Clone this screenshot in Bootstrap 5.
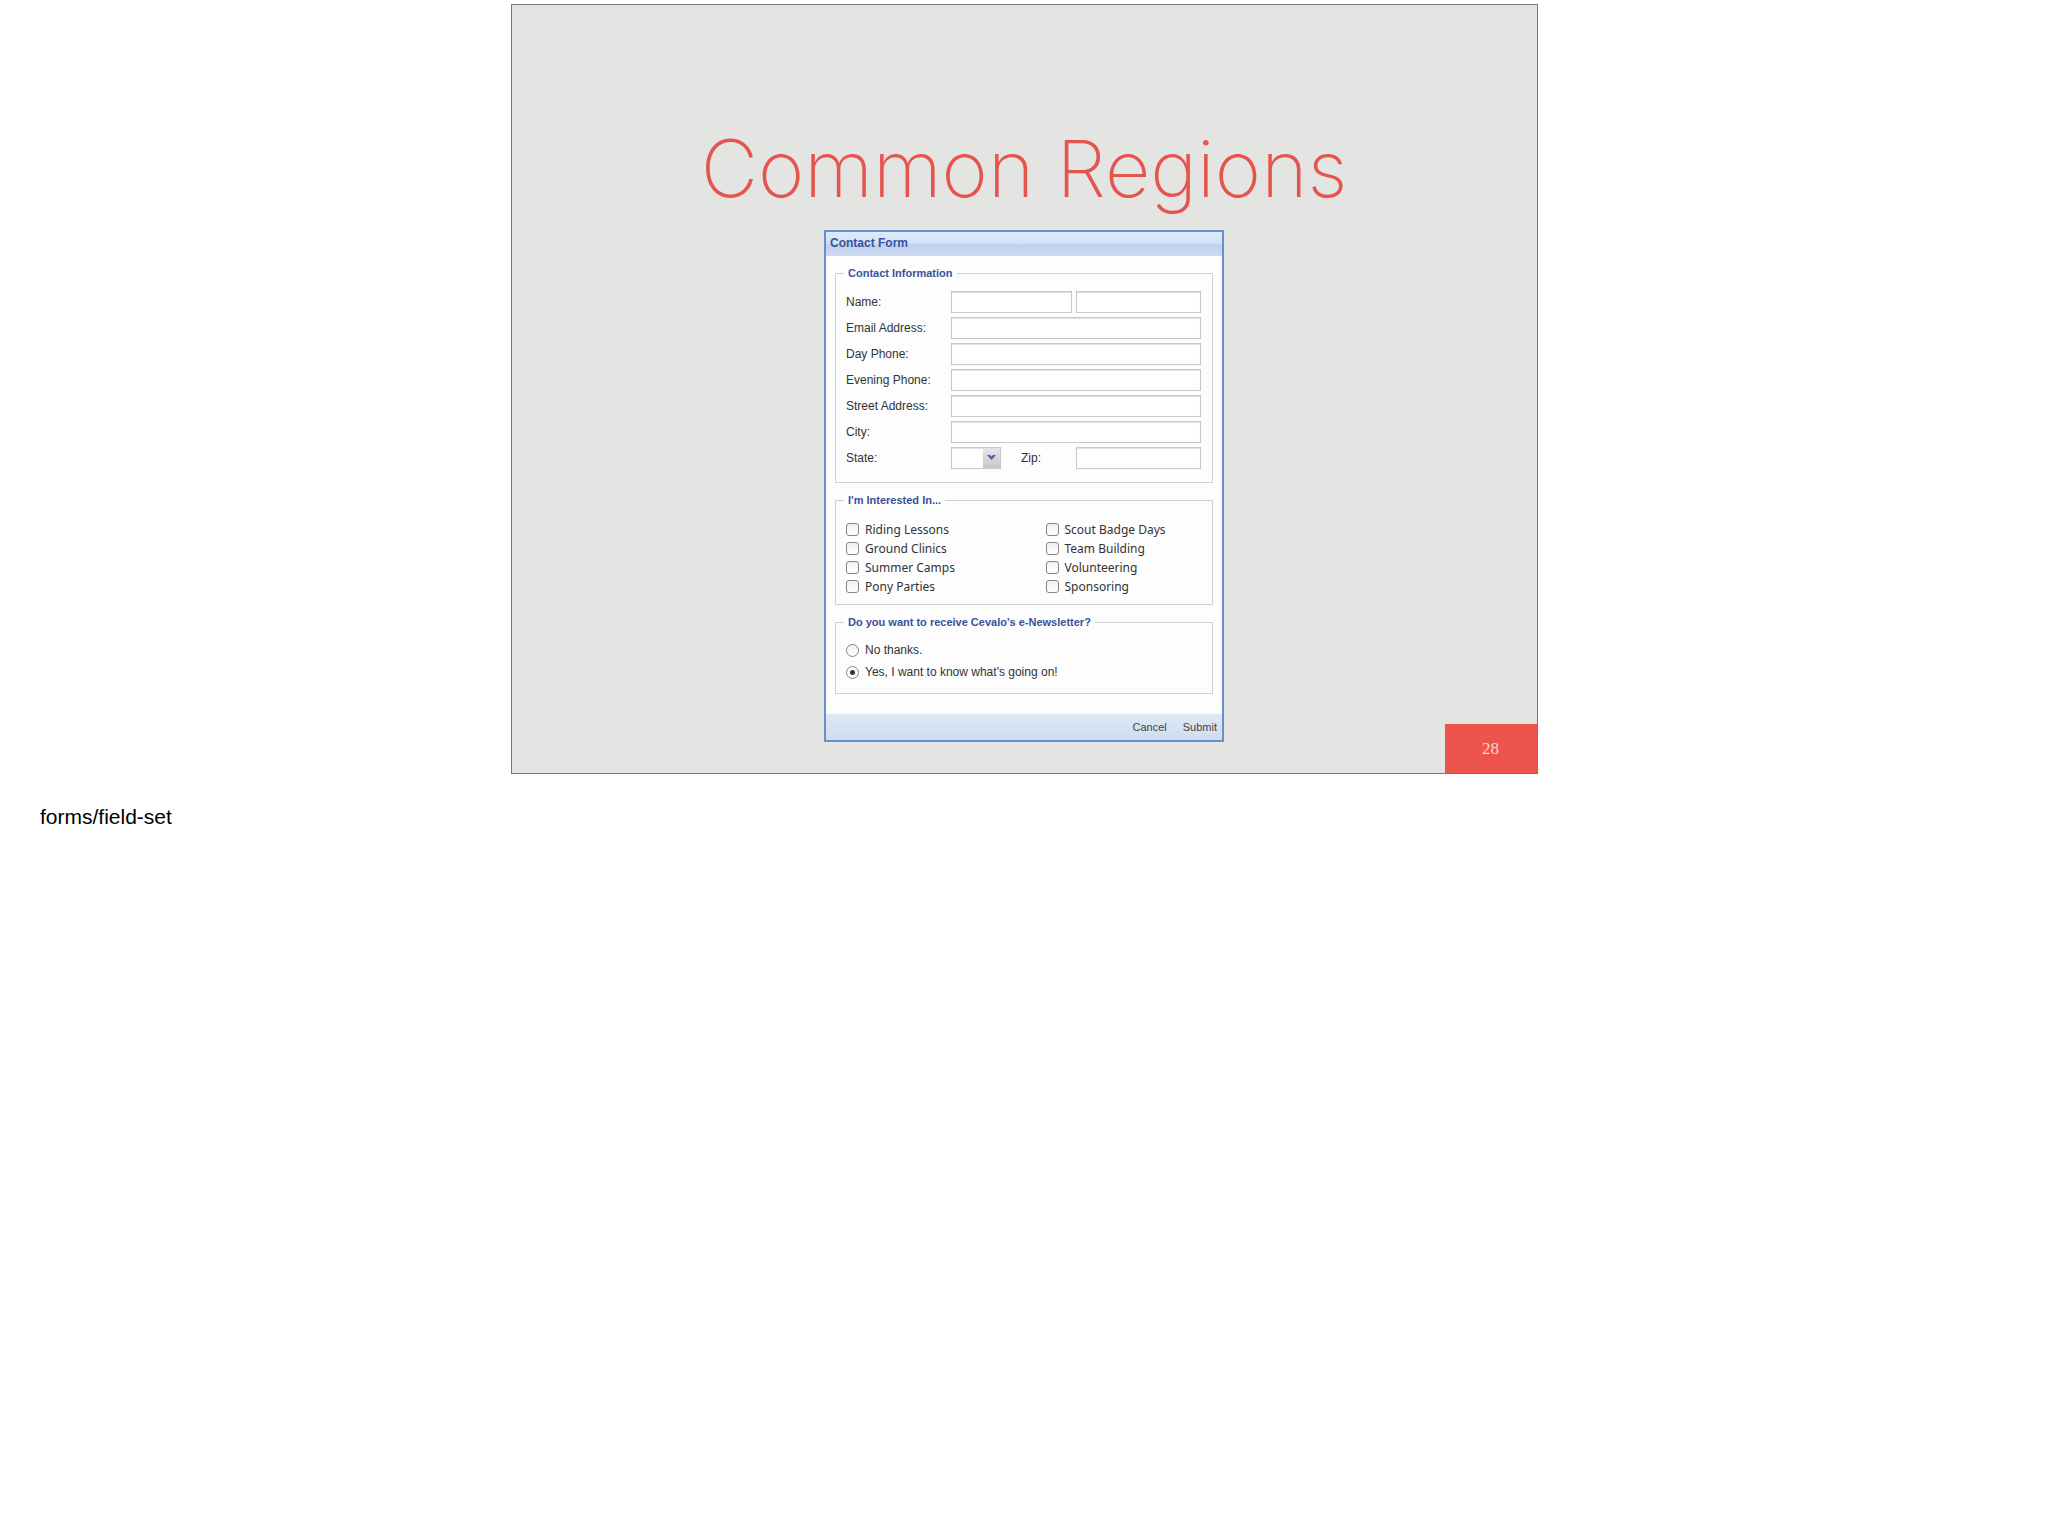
<!DOCTYPE html>
<html lang="en">
<head>
<meta charset="utf-8">
<meta name="viewport" content="width=device-width, initial-scale=1">
<title>Common Regions</title>
<link href="https://cdn.jsdelivr.net/npm/bootstrap@5.3.0/dist/css/bootstrap.min.css" rel="stylesheet">
<style>
  body { font-family: "Liberation Sans", Arial, sans-serif; color: #000; background: #fff; }
  .slide { max-width: 1027px; min-height: 770px; margin-top: 4px; border: 1px solid #767676; background: #e4e4e3; }
  .slide-title { font-family: Inter, "Liberation Sans", sans-serif; font-weight: 200; font-size: 79px; line-height: 96px; color: #e5544d; margin: 115px 0 14px; }
  .slide-number { background: #ed544c; color: #f9d5d0; width: 92px; height: 49px; font-family: "Liberation Serif", serif; font-size: 17px; }
  .notes { font-size: 21px; line-height: 28px; padding: 29px 40px; }

  .contact { max-width: 400px; border: 2px solid #668fd0; background: #fdfdfe; font-size: 12px; line-height: 18px; color: #333; }
  .contact-head { height: 24px; padding: 0 4px; font-size: 12px; line-height: 22px; font-weight: 700; color: #38529a;
    background: linear-gradient(#dfebfa 0, #cfe0f6 48%, #bdd0ec 52%, #cdd9f0 100%); }
  .contact-body { padding: 8px 9px 20px; }
  .group { border: 1px solid #cfd1d5; padding: 0 11px 0 10px; margin: 0 0 8px; }
  .group legend { float: none; width: auto; margin: 0 0 0 -2px; padding: 0 4px; font-size: 11px; line-height: 18px; font-weight: 700; color: #38529a; }
  .fields { padding: 9px 0 13px; row-gap: 4px; }
  .line { height: 22px; }
  .line label { width: 105px; flex: none; }
  .line .zip { width: 74px; padding-left: 20px; }
  .field { height: 22px; padding: 0 4px; border: 1px solid #c6c8cd; border-radius: 0; font-size: 12px; box-shadow: inset 0 1px 1px #dcdde0; background: #fff; min-width: 0; }
  .half { width: 125px; flex: none; }
  .state { width: 50px; appearance: none; }
  .state-arrow { width: 17px; height: 20px; right: 1px; top: 1px; background: linear-gradient(#e6e7ea, #c6c8cd); pointer-events: none; }
  .checks { padding: 11px 0 8px; }
  .checks .col-6:nth-child(even) { padding-left: 22px; }
  .option { font-family: "Noto Sans", sans-serif; height: 19px; }
  .option, .radio-line { gap: 6px; }
  .tick { appearance: none; width: 13px; height: 13px; margin: 0; border: 1px solid #858585; border-radius: 3px; background: linear-gradient(#f1f1f1, #fff); flex: none; }
  .tick[type=radio] { border-radius: 50%; }
  .tick[type=radio]:checked { background: radial-gradient(circle, #333 0 2px, #fff 3px); }
  .radios { padding: 8px 0 10px; }
  .radio-line { height: 22px; }
  .contact-foot { height: 26px; padding: 0 5px; gap: 16px; background: linear-gradient(#dfe8f6, #d0dcee); }
  .contact-foot button { border: 0; background: none; padding: 0; font-size: 11px; color: #444; }
</style>
</head>
<body>
<main class="slide position-relative mx-auto overflow-hidden">
  <h1 class="slide-title text-center">Common Regions</h1>
  <form class="contact mx-auto">
    <div class="contact-head">Contact Form</div>
    <div class="contact-body">
      <fieldset class="group">
        <legend>Contact Information</legend>
        <div class="fields d-flex flex-column">
          <div class="line d-flex align-items-center"><label for="first">Name:</label><input class="field flex-fill me-1" id="first" type="text" size="8"><input class="field half" type="text" aria-label="Last name"></div>
          <div class="line d-flex align-items-center"><label for="email">Email Address:</label><input class="field flex-fill" id="email" type="email"></div>
          <div class="line d-flex align-items-center"><label for="day">Day Phone:</label><input class="field flex-fill" id="day" type="tel"></div>
          <div class="line d-flex align-items-center"><label for="evening">Evening Phone:</label><input class="field flex-fill" id="evening" type="tel"></div>
          <div class="line d-flex align-items-center"><label for="street">Street Address:</label><input class="field flex-fill" id="street" type="text"></div>
          <div class="line d-flex align-items-center"><label for="city">City:</label><input class="field flex-fill" id="city" type="text"></div>
          <div class="line d-flex align-items-center"><label for="state">State:</label>
            <div class="position-relative">
              <select class="field state d-block" id="state"><option></option></select>
              <span class="state-arrow position-absolute d-flex align-items-center justify-content-center"><svg width="9" height="6" viewBox="0 0 9 6"><path d="M0 0h3l1.500 1.500L6 0h3L4.500 5z" fill="#4a5cae"/></svg></span>
            </div>
            <label class="zip" for="zip">Zip:</label><input class="field half ms-auto" id="zip" type="text"></div>
        </div>
      </fieldset>
      <fieldset class="group">
        <legend>I'm Interested In...</legend>
        <div class="checks row g-0">
          <div class="col-6"><label class="option d-flex align-items-center"><input class="tick" type="checkbox">Riding Lessons</label></div>
          <div class="col-6"><label class="option d-flex align-items-center"><input class="tick" type="checkbox">Scout Badge Days</label></div>
          <div class="col-6"><label class="option d-flex align-items-center"><input class="tick" type="checkbox">Ground Clinics</label></div>
          <div class="col-6"><label class="option d-flex align-items-center"><input class="tick" type="checkbox">Team Building</label></div>
          <div class="col-6"><label class="option d-flex align-items-center"><input class="tick" type="checkbox">Summer Camps</label></div>
          <div class="col-6"><label class="option d-flex align-items-center"><input class="tick" type="checkbox">Volunteering</label></div>
          <div class="col-6"><label class="option d-flex align-items-center"><input class="tick" type="checkbox">Pony Parties</label></div>
          <div class="col-6"><label class="option d-flex align-items-center"><input class="tick" type="checkbox">Sponsoring</label></div>
        </div>
      </fieldset>
      <fieldset class="group mb-0">
        <legend>Do you want to receive Cevalo's e-Newsletter?</legend>
        <div class="radios">
          <label class="radio-line d-flex align-items-center"><input class="tick" type="radio" name="news">No thanks.</label>
          <label class="radio-line d-flex align-items-center"><input class="tick" type="radio" name="news" checked>Yes, I want to know what's going on!</label>
        </div>
      </fieldset>
    </div>
    <div class="contact-foot d-flex align-items-center justify-content-end">
      <button type="button">Cancel</button><button type="submit">Submit</button>
    </div>
  </form>
  <div class="slide-number position-absolute bottom-0 end-0 d-flex align-items-center justify-content-center">28</div>
</main>
<p class="notes mb-0">forms/field-set</p>
<script src="https://cdn.jsdelivr.net/npm/bootstrap@5.3.0/dist/js/bootstrap.bundle.min.js"></script>
</body>
</html>
